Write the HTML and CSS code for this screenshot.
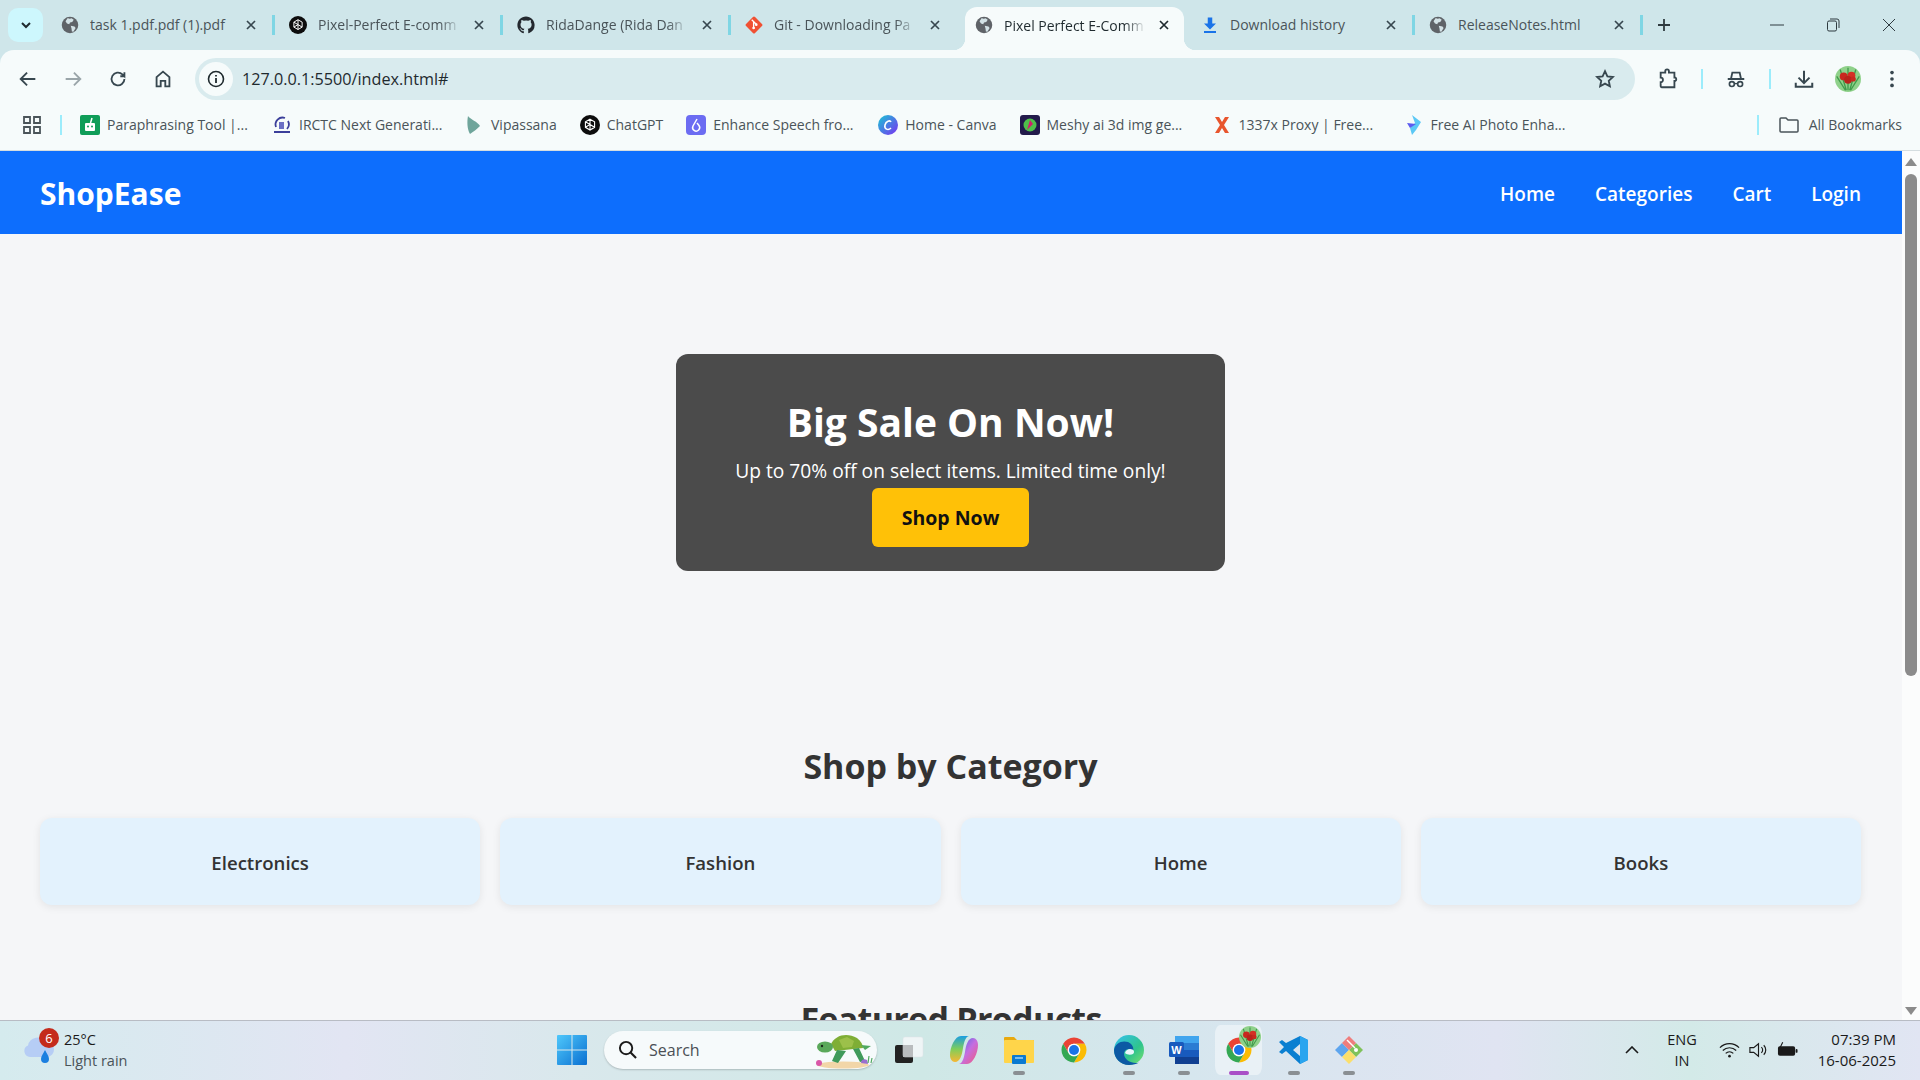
FILE: index.html
```html
<!DOCTYPE html>
<html lang="en">
<head>
    <meta charset="UTF-8">
    <title>Pixel Perfect E-Commerce</title>
    <link rel="stylesheet" href="styles.css">
</head>
<body>

    <!-- shared icons -->
    <svg class="icon-defs" width="0" height="0">
        <symbol id="globe" viewBox="0 0 24 24">
            <circle cx="12" cy="12" r="11" fill="#5f6368"/>
            <path d="M9 2.500c1.500 1.500 4 1 5 .5l3 2-2 3-3 .5-1 2.500-3-1-2-3zM13 13l5 1 1.500 2-3 5-2-.5-.5-4z" fill="#d3e2e6"/>
        </symbol>
        <symbol id="openai" viewBox="0 0 24 24">
            <circle cx="12" cy="12" r="12" fill="#0d0d0d"/>
            <path d="M12 5l5.500 3.200v6.600L12 18l-5.500-3.200V8.200zM12 5v6.500l5.500 3.300M6.500 8.200l5.500 3.300-5.500 3.300M12 18v-6.500" fill="none" stroke="#fff" stroke-width="1.300"/>
        </symbol>
        <symbol id="github" viewBox="0 0 24 24">
            <path d="M12 .5C5.650.5.500 5.650.500 12c0 5.080 3.290 9.390 7.860 10.910.58.110.79-.25.79-.56v-2.170c-3.200.7-3.870-1.360-3.870-1.360-.52-1.330-1.280-1.690-1.280-1.690-1.050-.72.08-.7.08-.7 1.160.08 1.770 1.190 1.770 1.190 1.030 1.760 2.700 1.250 3.360.96.1-.75.4-1.250.73-1.540-2.550-.29-5.240-1.280-5.240-5.680 0-1.260.45-2.280 1.190-3.090-.12-.29-.52-1.460.11-3.050 0 0 .97-.31 3.180 1.180a11 11 0 0 1 5.790 0c2.210-1.490 3.180-1.180 3.180-1.180.63 1.590.23 2.760.11 3.050.74.81 1.190 1.830 1.190 3.090 0 4.420-2.690 5.390-5.250 5.670.41.36.78 1.050.78 2.120v3.140c0 .31.21.67.8.56A11.500 11.500 0 0 0 23.500 12C23.500 5.650 18.350.5 12 .5z" fill="#24292f"/>
        </symbol>
        <symbol id="git" viewBox="0 0 24 24">
            <rect x="3.500" y="3.500" width="17" height="17" rx="2" transform="rotate(45 12 12)" fill="#f05133"/>
            <path d="M9 5l6 6M11.500 8v8" stroke="#fff" stroke-width="1.800"/>
            <circle cx="11.500" cy="16" r="1.800" fill="#fff"/>
            <circle cx="15" cy="11.500" r="1.800" fill="#fff"/>
        </symbol>
        <symbol id="close" viewBox="0 0 12 12">
            <path d="M2 2l8 8M10 2l-8 8" fill="none" stroke="currentColor" stroke-width="1.700"/>
        </symbol>
        <symbol id="chrome" viewBox="0 0 48 48">
            <path d="M6.680 14A20 20 0 0 1 41.320 14H24A10 10 0 0 0 15.340 29z" fill="#ea4335"/>
            <path d="M41.320 14A20 20 0 0 1 24 44L32.660 29A10 10 0 0 0 24 14z" fill="#fbbc04"/>
            <path d="M24 44A20 20 0 0 1 6.680 14L15.340 29A10 10 0 0 0 32.660 29z" fill="#34a853"/>
            <circle cx="24" cy="24" r="10" fill="#fff"/>
            <circle cx="24" cy="24" r="8" fill="#1a73e8"/>
        </symbol>
        <symbol id="rose" viewBox="0 0 30 30">
            <circle cx="15" cy="15" r="15" fill="#8fd18a"/>
            <path d="M6 4l7 24M24 4l-7 24M15 2v26M2 12l10 16M28 12L18 28" stroke="#3f9a4b" stroke-width="1.500"/>
            <circle cx="10" cy="12" r="4.500" fill="#c8281f"/>
            <circle cx="19" cy="11" r="4.500" fill="#d42f25"/>
            <circle cx="15" cy="16" r="4.500" fill="#b8231b"/>
            <circle cx="21" cy="15" r="3" fill="#c8281f"/>
        </symbol>
    </svg>

    <!-- Browser tabs -->
    <div class="tabstrip">
        <button class="tab-search">
            <svg class="tab-search-icon" viewBox="0 0 12 12"><path d="M2 4l4 4 4-4" fill="none" stroke="#1f2a2e" stroke-width="2"/></svg>
        </button>
        <div class="tab">
            <svg class="favicon"><use href="#globe"/></svg>
            <span class="tab-title">task 1.pdf.pdf (1).pdf</span>
            <svg class="tab-close"><use href="#close"/></svg>
        </div>
        <div class="tab">
            <svg class="favicon"><use href="#openai"/></svg>
            <span class="tab-title tab-fade">Pixel-Perfect E-comm</span>
            <svg class="tab-close"><use href="#close"/></svg>
        </div>
        <div class="tab">
            <svg class="favicon"><use href="#github"/></svg>
            <span class="tab-title tab-fade">RidaDange (Rida Dan</span>
            <svg class="tab-close"><use href="#close"/></svg>
        </div>
        <div class="tab tab-before-active">
            <svg class="favicon"><use href="#git"/></svg>
            <span class="tab-title tab-fade">Git - Downloading Pa</span>
            <svg class="tab-close"><use href="#close"/></svg>
        </div>
        <div class="tab tab-active">
            <svg class="favicon"><use href="#globe"/></svg>
            <span class="tab-title tab-fade">Pixel Perfect E-Comm</span>
            <svg class="tab-close"><use href="#close"/></svg>
        </div>
        <div class="tab">
            <svg class="favicon" viewBox="0 0 24 24"><path d="M9 2h6v8h5l-8 8-8-8h5zM4 20h16v2.500H4z" fill="#1a73e8"/></svg>
            <span class="tab-title">Download history</span>
            <svg class="tab-close"><use href="#close"/></svg>
        </div>
        <div class="tab">
            <svg class="favicon"><use href="#globe"/></svg>
            <span class="tab-title">ReleaseNotes.html</span>
            <svg class="tab-close"><use href="#close"/></svg>
        </div>
        <svg class="new-tab" viewBox="0 0 14 14"><path d="M7 1v12M1 7h12" stroke="#2f3b40" stroke-width="1.800"/></svg>
        <div class="window-controls">
            <svg class="win-btn" viewBox="0 0 14 14"><path d="M0 7h14" stroke="#2f3b40"/></svg>
            <svg class="win-btn" viewBox="0 0 14 14"><rect x="1.500" y="3" width="9" height="10" rx="1.500" fill="none" stroke="#2f3b40"/><path d="M4 1h7a2 2 0 0 1 2 2v7" fill="none" stroke="#2f3b40"/></svg>
            <svg class="win-btn" viewBox="0 0 14 14"><path d="M1 1l12 12M13 1L1 13" stroke="#2f3b40"/></svg>
        </div>
    </div>

    <!-- Address bar -->
    <div class="toolbar">
        <svg class="tool-icon" viewBox="0 0 24 24"><path d="M20 12H5M11 5l-7 7 7 7" fill="none" stroke="#37474f" stroke-width="2"/></svg>
        <svg class="tool-icon" viewBox="0 0 24 24"><path d="M4 12h15M13 5l7 7-7 7" fill="none" stroke="#9aa5a9" stroke-width="2"/></svg>
        <svg class="tool-icon" viewBox="0 0 24 24"><path d="M19 12a7 7 0 1 1-2.200-5.100L19 9V4.500M19 9h-4.500" fill="none" stroke="#37474f" stroke-width="2"/></svg>
        <svg class="tool-icon" viewBox="0 0 24 24"><path d="M5 20V10l7-6 7 6v10h-4.500v-6h-5v6z" fill="none" stroke="#37474f" stroke-width="2"/></svg>
        <div class="omnibox">
            <span class="site-info">
                <svg class="site-info-icon" viewBox="0 0 18 18"><circle cx="9" cy="9" r="7.500" fill="none" stroke="#1f2a2e" stroke-width="1.600"/><path d="M9 8v5M9 5v1.600" stroke="#1f2a2e" stroke-width="1.800"/></svg>
            </span>
            <span class="url">127.0.0.1:5500/index.html#</span>
            <svg class="star" viewBox="0 0 24 24"><path d="M12 3.500l2.600 5.600 6 .7-4.500 4.100 1.200 6L12 17l-5.300 2.900 1.200-6-4.500-4.100 6-.7z" fill="none" stroke="#37474f" stroke-width="2"/></svg>
        </div>
        <div class="toolbar-actions">
            <svg class="tool-icon" viewBox="0 0 24 24"><path d="M4 5h5V3.500a2 2 0 0 1 4 0V5h6v5.500h1a2 2 0 0 1 0 3.500h-1v7H5a1 1 0 0 1-1-1v-4.500a2.500 2.500 0 0 0 0-5z" fill="none" stroke="#37474f" stroke-width="2"/></svg>
            <span class="tool-sep"></span>
            <svg class="tool-icon" viewBox="0 0 24 24"><path d="M3 12h18M6.500 12l1.500-7h8l1.500 7" fill="none" stroke="#37474f" stroke-width="2"/><circle cx="7.500" cy="17.500" r="2.700" fill="none" stroke="#37474f" stroke-width="1.800"/><circle cx="16.500" cy="17.500" r="2.700" fill="none" stroke="#37474f" stroke-width="1.800"/><path d="M10 17h4" stroke="#37474f" stroke-width="1.500"/></svg>
            <span class="tool-sep"></span>
            <svg class="tool-icon" viewBox="0 0 24 24"><path d="M12 3v13M6 10.500l6 6 6-6M3 16v4.500h18V16" fill="none" stroke="#37474f" stroke-width="2.200"/></svg>
            <svg class="avatar"><use href="#rose"/></svg>
            <svg class="tool-icon tool-menu" viewBox="0 0 24 24"><circle cx="12" cy="5" r="2" fill="#37474f"/><circle cx="12" cy="12" r="2" fill="#37474f"/><circle cx="12" cy="19" r="2" fill="#37474f"/></svg>
        </div>
    </div>

    <!-- Bookmarks -->
    <div class="bookmarks">
        <svg class="apps" viewBox="0 0 18 18"><path d="M1 1h6v6H1zM11 1h6v6h-6zM1 11h6v6H1zM11 11h6v6h-6z" fill="none" stroke="#4a5459" stroke-width="1.800"/></svg>
        <span class="bm-sep"></span>
        <div class="bm">
            <svg class="bm-icon" viewBox="0 0 20 20"><rect width="20" height="20" rx="2" fill="#0f9d58"/><rect x="5" y="8" width="10" height="8" rx="1" fill="#fff"/><path d="M12 3l-1.500 5" stroke="#fff" stroke-width="1.500"/><circle cx="8" cy="11.500" r="1" fill="#0f9d58"/><circle cx="12" cy="11.500" r="1" fill="#0f9d58"/></svg>
            Paraphrasing Tool |...
        </div>
        <div class="bm">
            <svg class="bm-icon" viewBox="0 0 20 20"><path d="M4 12a7 7 0 0 1 9-9M16 6a7 7 0 0 1-1 8" fill="none" stroke="#3b3f9a" stroke-width="1.800"/><path d="M7 7h5v7H7z" fill="#6a6fc4"/><path d="M2 17h16" stroke="#3b3f9a" stroke-width="2"/></svg>
            IRCTC Next Generati...
        </div>
        <div class="bm bm-short">
            <svg class="bm-icon" viewBox="0 0 20 20"><path d="M4 1c2 3 10 6 12 10-3 3-7 6-10 8C3 14 3 6 4 1z" fill="#6fa59b"/></svg>
            Vipassana
        </div>
        <div class="bm bm-short">
            <svg class="bm-icon"><use href="#openai"/></svg>
            ChatGPT
        </div>
        <div class="bm">
            <svg class="bm-icon" viewBox="0 0 20 20"><rect width="20" height="20" rx="4" fill="#6c6cf2"/><path d="M11 4L7 11a3.500 3.500 0 1 0 6-.5L11 8" fill="none" stroke="#fff" stroke-width="1.500"/></svg>
            Enhance Speech fro...
        </div>
        <div class="bm bm-short">
            <svg class="bm-icon" viewBox="0 0 20 20"><defs><linearGradient id="canva" x1="0" y1="0" x2="1" y2="1"><stop offset="0" stop-color="#18c8d4"/><stop offset="1" stop-color="#7b2ff2"/></linearGradient></defs><circle cx="10" cy="10" r="10" fill="url(#canva)"/><path d="M13 7c-1-2-5-1-6 3s3 6 6 3" fill="none" stroke="#fff" stroke-width="1.600"/></svg>
            Home - Canva
        </div>
        <div class="bm">
            <svg class="bm-icon" viewBox="0 0 20 20"><rect width="20" height="20" rx="3" fill="#221a4a"/><circle cx="10" cy="10" r="6.500" fill="#4fc04a"/><path d="M7 15l3-10 3 4z" fill="#d11f6e"/></svg>
            Meshy ai 3d img ge...
        </div>
        <div class="bm">
            <svg class="bm-icon" viewBox="0 0 20 20"><path d="M3 2h4l3 5 3-5h4l-5 8 5 8h-4l-3-5-3 5H3l5-8z" fill="#e8552d"/></svg>
            1337x Proxy | Free...
        </div>
        <div class="bm">
            <svg class="bm-icon" viewBox="0 0 20 20"><path d="M8 0l9 7-5 8-4 5-2-7 5-5z" fill="#5bc8f5"/><path d="M3 8l9 1-6 4z" fill="#5b5bf0"/></svg>
            Free AI Photo Enha...
        </div>
        <span class="bm-sep bm-sep-end"></span>
        <div class="bm bm-all">
            <svg class="bm-icon" viewBox="0 0 20 18"><path d="M1 3a1 1 0 0 1 1-1h5l2 2h9a1 1 0 0 1 1 1v10a1 1 0 0 1-1 1H2a1 1 0 0 1-1-1z" fill="none" stroke="#4a5459" stroke-width="1.500"/></svg>
            All Bookmarks
        </div>
    </div>

    <!-- Page inside the browser -->
    <div class="viewport">
        <div class="page">
            <header class="navbar">
                <div class="logo">ShopEase</div>
                <nav class="nav-links">
                    <a href="#">Home</a>
                    <a href="#">Categories</a>
                    <a href="#">Cart</a>
                    <a href="#">Login</a>
                </nav>
            </header>

            <section class="hero">
                <div class="hero-card">
                    <h1>Big Sale On Now!</h1>
                    <p>Up to 70% off on select items. Limited time only!</p>
                    <a class="shop-btn" href="#">Shop Now</a>
                </div>
            </section>

            <section class="categories">
                <h2>Shop by Category</h2>
                <div class="category-grid">
                    <div class="category-card">Electronics</div>
                    <div class="category-card">Fashion</div>
                    <div class="category-card">Home</div>
                    <div class="category-card">Books</div>
                </div>
            </section>

            <section class="featured">
                <h2>Featured Products</h2>
            </section>
        </div>

        <div class="scrollbar">
            <span class="arrow-up"></span>
            <span class="scroll-thumb"></span>
            <span class="arrow-down"></span>
        </div>
    </div>

    <!-- Windows taskbar -->
    <footer class="taskbar">
        <div class="weather">
            <svg class="weather-icon" viewBox="0 0 34 34"><path d="M9 24a6 6 0 0 1-2-11.500A10 10 0 0 1 25 9a7.500 7.500 0 0 1 1 15z" fill="#b6cdf5"/><path d="M24 17c2 4 4 6 4 9a4 4 0 0 1-8 0c0-3 2-5 4-9z" fill="#1b7fe0"/></svg>
            <span class="weather-badge">6</span>
            <div class="weather-text">
                <div class="temp">25°C</div>
                <div class="cond">Light rain</div>
            </div>
        </div>

        <div class="task-center">
            <svg class="win-logo" viewBox="0 0 30 30">
                <defs><linearGradient id="win" x1="0" y1="0" x2="1" y2="1"><stop offset="0" stop-color="#4fc8fb"/><stop offset="1" stop-color="#0a6fd1"/></linearGradient></defs>
                <path d="M0 1a1 1 0 0 1 1-1h13.500v14.500H0zM15.500 0H29a1 1 0 0 1 1 1v13.500H15.500zM0 15.500h14.500V30H1a1 1 0 0 1-1-1zM15.500 15.500H30V29a1 1 0 0 1-1 1H15.500z" fill="url(#win)"/>
            </svg>
            <div class="search-box">
                <svg class="search-icon" viewBox="0 0 20 20"><circle cx="8.500" cy="8.500" r="6.500" fill="none" stroke="#1a1a1a" stroke-width="2"/><path d="M13 13l6 6" stroke="#1a1a1a" stroke-width="2.200"/></svg>
                <span>Search</span>
                <svg class="turtle" viewBox="0 0 60 40">
                    <ellipse cx="30" cy="35" rx="26" ry="3.500" fill="#f2d6a8"/>
                    <path d="M18 14C22 5 34 2 44 8c4 3 6 7 6 10L22 21z" fill="#7fae35"/>
                    <path d="M26 10l8-3 7 4-2 6-9 1z" fill="#9cc04a"/>
                    <path d="M24 20l-5 11 6 2 8-12zM40 19l7 13 5-1-6-13z" fill="#3f9a5b"/>
                    <ellipse cx="12" cy="17" rx="8" ry="5.500" fill="#5aa85a"/>
                    <circle cx="9" cy="16" r="1.200" fill="#1c2a1c"/>
                    <path d="M48 15l10 1-6 4z" fill="#4fa860"/>
                    <circle cx="6" cy="33" r="3" fill="#d957a8"/>
                    <path d="M48 33c0-3 3-5 6-3l1 4z" fill="#9a6fd0"/>
                    <path d="M55 33l1-7M58 33l1-5" stroke="#4fa860" stroke-width="1.200"/>
                </svg>
            </div>
            <div class="task-apps">
                <div class="app">
                    <svg class="app-icon" viewBox="0 0 30 30"><rect x="1" y="10" width="18" height="18" rx="2" fill="#222"/><rect x="9" y="2" width="20" height="20" rx="2" fill="#f4f7f8" fill-opacity=".85" stroke="#dde3e6" stroke-width=".5"/><rect x="9" y="10" width="10" height="12" fill="#b9bcbe"/></svg>
                </div>
                <div class="app">
                    <svg class="app-icon" viewBox="0 0 30 30"><defs><linearGradient id="cop1" x1="0" y1="0" x2="0" y2="1"><stop offset="0" stop-color="#1b9de2"/><stop offset=".5" stop-color="#7fce5a"/><stop offset="1" stop-color="#f7b733"/></linearGradient><linearGradient id="cop2" x1="0" y1="0" x2="1" y2="1"><stop offset="0" stop-color="#3f6be8"/><stop offset=".5" stop-color="#c56ee0"/><stop offset="1" stop-color="#f2597a"/></linearGradient></defs><path d="M12 1h8c-4 1-5 7-6 12-1 7-3 14-8 14-3 0-5-3-5-7C1 12 6 1 12 1z" fill="url(#cop1)"/><path d="M18 29h-8c4-1 5-7 6-12 1-7 3-14 8-14 3 0 5 3 5 7 0 8-5 19-11 19z" fill="url(#cop2)"/></svg>
                </div>
                <div class="app app-open">
                    <svg class="app-icon" viewBox="0 0 30 30"><path d="M0 3a1 1 0 0 1 1-1h9l3 3h16a1 1 0 0 1 1 1v5H0z" fill="#e8a90f"/><rect y="5" width="30" height="23" rx="1" fill="#ffd54a"/><rect x="8" y="20" width="14" height="9" rx="1" fill="#0a7ad1"/><path d="M11 23h8" stroke="#9fd4f7" stroke-width="1.500"/></svg>
                </div>
                <div class="app">
                    <svg class="app-icon"><use href="#chrome"/></svg>
                </div>
                <div class="app app-open">
                    <svg class="app-icon" viewBox="0 0 30 30"><defs><linearGradient id="edge" x1="0" y1="0" x2="1" y2="1"><stop offset="0" stop-color="#35c1f1"/><stop offset=".6" stop-color="#2fc48d"/><stop offset="1" stop-color="#7ee26a"/></linearGradient></defs><circle cx="15" cy="15" r="15" fill="url(#edge)"/><path d="M0 15C1 8 8 5 14 7c5 2 6 7 5 9-4-3-9-2-9 3 0 5 6 9 12 9 1 0 2 0 3-.5C23 29 19 30 15 30 6 30 0 23 0 15z" fill="#0c59a4"/><path d="M16 14c4 0 5 3 3 5-2 1-6 1-8-1 1-3 3-4 5-4z" fill="#e8f6fc"/></svg>
                </div>
                <div class="app app-open">
                    <svg class="app-icon" viewBox="0 0 30 30"><rect x="6" y="1" width="24" height="28" rx="1.500" fill="#2b7cd3"/><rect x="6" y="1" width="24" height="7" fill="#41a5ee"/><rect x="6" y="15" width="24" height="7" fill="#185abd"/><rect x="6" y="22" width="24" height="7" fill="#103f91"/><rect y="7" width="15" height="15" rx="1.500" fill="#185abd"/><text class="word-w" x="7.500" y="18.500">W</text></svg>
                </div>
                <div class="app app-active">
                    <svg class="app-icon"><use href="#chrome"/></svg>
                    <svg class="app-badge"><use href="#rose"/></svg>
                </div>
                <div class="app app-open">
                    <svg class="app-icon" viewBox="0 0 30 30"><path d="M21 1l8 4v20l-8 4L7 16l-4 3-3-2 5-5-5-5 3-2 4 3zM21 9l-7 6 7 6z" fill="#0a7fd1"/><path d="M21 1l8 4v20l-8 4z" fill="#2aa5ef"/></svg>
                </div>
                <div class="app app-open">
                    <svg class="app-icon" viewBox="0 0 30 30"><path d="M8 8l7 7-7 7-7-7z" fill="#5ea5ee"/><path d="M22 8l7 7-7 7-7-7z" fill="#7fc25a"/><path d="M15 15l7 7-7 7-7-7z" fill="#fbdf6c"/><path d="M15 1l7 7-7 7-7-7z" fill="#ef7d7d"/><path d="M13 5l8 8" stroke="#fff" stroke-width="1.500"/><circle cx="22" cy="15" r="2" fill="#fff"/></svg>
                </div>
            </div>
        </div>

        <div class="tray">
            <svg class="tray-chevron" viewBox="0 0 14 8"><path d="M1 7l6-6 6 6" fill="none" stroke="#1a1a1a" stroke-width="1.600"/></svg>
            <div class="lang">ENG<br>IN</div>
            <div class="tray-icons">
                <svg class="tray-icon" viewBox="0 0 22 18"><path d="M1 6.500a14 14 0 0 1 20 0M4 9.500a10 10 0 0 1 14 0M7 12.500a6 6 0 0 1 8 0" fill="none" stroke="#1a1a1a" stroke-width="1.300"/><circle cx="11" cy="15.500" r="1.400" fill="#1a1a1a"/></svg>
                <svg class="tray-icon" viewBox="0 0 22 18"><path d="M2 6.500h4l5-4v13l-5-4H2z" fill="none" stroke="#1a1a1a" stroke-width="1.200"/><path d="M14 6a4 4 0 0 1 0 6M16.500 4a7 7 0 0 1 0 10" fill="none" stroke="#1a1a1a" stroke-width="1.200"/></svg>
                <svg class="tray-icon" viewBox="0 0 22 18"><rect x="1" y="5" width="18" height="10" rx="2" fill="#1a1a1a"/><rect x="19.500" y="8" width="2" height="4" rx="1" fill="#1a1a1a"/><path d="M6 1L3 7h3l-1 4" fill="none" stroke="#1a1a1a" stroke-width="1.200"/></svg>
            </div>
            <div class="clock">07:39 PM<br>16-06-2025</div>
        </div>
    </footer>

</body>
</html>
```

FILE: styles.css
```css
* {
    box-sizing: border-box;
}

body {
    font-family: 'Open Sans', 'Noto Sans', sans-serif;
    margin: 0;
    height: 100vh;
    overflow: hidden;
    display: flex;
    flex-direction: column;
    background-color: #cfe6ea;
    color: #333;
}

svg {
    flex-shrink: 0;
    display: block;
}

.icon-defs {
    position: absolute;
}

/* Tabs */
.tabstrip {
    height: 50px;
    flex-shrink: 0;
    display: flex;
    align-items: center;
    padding-left: 8px;
    padding-bottom: 1px;
    background-color: #cfe6ea;
}

.tab-search {
    width: 35px;
    height: 34px;
    margin-right: 4px;
    border: none;
    border-radius: 10px;
    background-color: #cdf7fd;
    display: flex;
    align-items: center;
    justify-content: center;
    padding: 0;
}

.tab-search-icon {
    width: 12px;
    height: 12px;
}

.tab {
    width: 228px;
    height: 20px;
    padding: 0 15px 0 14px;
    display: flex;
    align-items: center;
    border-right: 3px solid #7fd6e4;
    font-size: 14px;
    color: #4a5459;
}

.tab-before-active {
    border-right-color: transparent;
}

.tab-active {
    position: relative;
    height: 43px;
    width: 219px;
    margin: 0 3px -1px 6px;
    padding: 0 14px 7px 10px;
    align-self: flex-end;
    background-color: #f6fbfb;
    border-radius: 12px 12px 0 0;
    border-right: none;
    color: #1f2a2e;
}

.tab-active::before,
.tab-active::after {
    content: "";
    position: absolute;
    bottom: 0;
    width: 12px;
    height: 12px;
}

.tab-active::before {
    left: -12px;
    background: radial-gradient(circle at 0 0, transparent 12px, #f6fbfb 12.500px);
}

.tab-active::after {
    right: -12px;
    background: radial-gradient(circle at 100% 0, transparent 12px, #f6fbfb 12.500px);
}

.favicon {
    width: 18px;
    height: 18px;
    margin-right: 11px;
}

.tab-title {
    flex: 1;
    overflow: hidden;
    white-space: nowrap;
}

.tab-fade {
    -webkit-mask-image: linear-gradient(to right, #000 85%, transparent);
    mask-image: linear-gradient(to right, #000 85%, transparent);
}

.tab-close {
    width: 12px;
    height: 12px;
    margin-left: 12px;
    color: #37474f;
}

.tab-active .tab-close {
    color: #1f2a2e;
}

.new-tab {
    width: 14px;
    height: 14px;
    margin-left: 14px;
}

.window-controls {
    margin-left: auto;
    display: flex;
    gap: 42px;
    padding-right: 24px;
}

.win-btn {
    width: 14px;
    height: 14px;
}

/* Address bar */
.toolbar {
    height: 50px;
    flex-shrink: 0;
    display: flex;
    align-items: center;
    padding: 8px 0 0 17px;
    gap: 23px;
    background-color: #f6fbfb;
    border-radius: 14px 14px 0 0;
}

.tool-icon {
    width: 22px;
    height: 22px;
}

.omnibox {
    width: 1440px;
    height: 42px;
    margin-left: -2px;
    padding: 0 14px 0 4px;
    border-radius: 21px;
    background-color: #d9ebee;
    display: flex;
    align-items: center;
    font-size: 16.200px;
    color: #1f2a2e;
}

.site-info {
    width: 34px;
    height: 34px;
    border-radius: 50%;
    background-color: #f6fbfb;
    display: flex;
    align-items: center;
    justify-content: center;
    margin-right: 9px;
}

.site-info-icon {
    width: 18px;
    height: 18px;
}

.url {
    flex: 1;
}

.star {
    width: 22px;
    height: 22px;
    margin-right: 5px;
}

.toolbar-actions {
    display: flex;
    align-items: center;
    gap: 22px;
    margin-left: -1px;
}

.tool-sep {
    width: 2px;
    height: 20px;
    background-color: #9cecfb;
}

.avatar {
    width: 26px;
    height: 30px;
    margin-left: -2px;
}

.tool-menu {
    margin-left: -2px;
}

/* Bookmarks */
.bookmarks {
    height: 51px;
    flex-shrink: 0;
    display: flex;
    align-items: center;
    padding: 0 0 1px 23px;
    background-color: #f6fbfb;
    font-size: 14px;
    color: #4a5459;
    border-bottom: 1px solid #d5dde0;
    white-space: nowrap;
}

.apps {
    width: 18px;
    height: 18px;
    margin-right: 19px;
}

.bm-sep {
    width: 2px;
    height: 20px;
    background-color: #9cecfb;
    margin-right: 18px;
}

.bm-sep-end {
    margin-left: auto;
    margin-right: 20px;
}

/* chrome caps long bookmarks at one width */
.bm {
    width: 192px;
    display: flex;
    align-items: center;
    gap: 7px;
}

.bm-short {
    width: auto;
    margin-right: 23px;
}

.bm-all {
    width: auto;
    margin-right: 18px;
    gap: 10px;
}

.bm-icon {
    width: 20px;
    height: 20px;
}

/* Web page */
.viewport {
    height: 869px;
    flex-shrink: 0;
    display: flex;
    overflow: hidden;
    background-color: #fff;
}

.page {
    width: 1902px;
    background-color: #f5f6f8;
}

.navbar {
    height: 83px;
    padding: 2px 41px 0 40px;
    display: flex;
    align-items: center;
    justify-content: space-between;
    background-color: #0d6efd;
    color: white;
}

.logo {
    font-size: 30px;
    font-weight: 700;
}

.nav-links {
    display: flex;
    gap: 40px;
}

.nav-links a {
    color: white;
    text-decoration: none;
    font-size: 19px;
    font-weight: 600;
}

.hero {
    padding-top: 120px;
    display: flex;
    justify-content: center;
}

.hero-card {
    width: 549px;
    height: 217px;
    margin-right: 1px;
    padding-top: 40px;
    background-color: #4b4b4b;
    border-radius: 12px;
    color: white;
    text-align: center;
    display: flex;
    flex-direction: column;
    align-items: center;
}

h1 {
    font-size: 39px;
    font-weight: 700;
    margin: 0;
    line-height: 56px;
}

.hero-card p {
    font-size: 19.200px;
    margin: 8px 0 0;
    line-height: 26px;
}

.shop-btn {
    width: 157px;
    height: 59px;
    margin-top: 4px;
    background-color: #ffc107;
    border-radius: 6px;
    color: #111;
    font-size: 19.500px;
    font-weight: 700;
    text-decoration: none;
    display: flex;
    align-items: center;
    justify-content: center;
}

h2 {
    font-size: 34px;
    font-weight: 700;
    margin: 0;
    line-height: 46px;
    text-align: center;
    color: #333;
}

.categories {
    padding: 172px 41px 0 40px;
}

.category-grid {
    margin-top: 29px;
    display: grid;
    grid-template-columns: repeat(4, 1fr);
    gap: 20px;
}

.category-card {
    height: 87px;
    padding-top: 2px;
    background-color: #e3f2fd;
    border-radius: 12px;
    box-shadow: 0 2px 8px rgba(0, 0, 0, 0.08);
    display: flex;
    align-items: center;
    justify-content: center;
    font-size: 18.600px;
    font-weight: 600;
}

.featured {
    padding-top: 91px;
}

.featured h2 {
    letter-spacing: -0.7px;
}

.scrollbar {
    width: 18px;
    display: flex;
    flex-direction: column;
    align-items: center;
    padding-top: 7px;
    background-color: #fbfcfc;
}

.arrow-up {
    width: 0;
    height: 0;
    border-left: 6px solid transparent;
    border-right: 6px solid transparent;
    border-bottom: 8px solid #8b8b8b;
}

.scroll-thumb {
    width: 12px;
    height: 502px;
    margin-top: 8px;
    background-color: #8b8b8b;
    border-radius: 6px;
}

.arrow-down {
    width: 0;
    height: 0;
    margin-top: auto;
    margin-bottom: 5px;
    border-left: 6px solid transparent;
    border-right: 6px solid transparent;
    border-top: 8px solid #8b8b8b;
}

/* Taskbar */
.taskbar {
    height: 60px;
    flex-shrink: 0;
    display: flex;
    align-items: center;
    padding-bottom: 2px;
    border-top: 1px solid #b8bcc4;
    background: linear-gradient(90deg, #d5ebee 0%, #e2e5f3 18%, #d9e8ec 30%, #cfe8e6 48%, #d6e6ee 62%, #e0e4f2 78%, #d3eae8 88%, #e1e5f3 100%);
    color: #1a1a1a;
    font-size: 14.500px;
}

.weather {
    width: 557px;
    padding-left: 21px;
    display: flex;
    align-items: center;
    position: relative;
}

.weather-icon {
    width: 34px;
    height: 34px;
}

.weather-badge {
    position: absolute;
    left: 39px;
    top: -1px;
    width: 20px;
    height: 20px;
    border-radius: 50%;
    background-color: #c42b1c;
    color: white;
    font-size: 13px;
    text-align: center;
    line-height: 20px;
}

.weather-text {
    margin-left: 9px;
    line-height: 21px;
}

.cond {
    color: #4a5459;
}

.task-center {
    display: flex;
    align-items: center;
}

.win-logo {
    width: 30px;
    height: 30px;
}

.search-box {
    width: 273px;
    height: 38px;
    margin-left: 17px;
    padding-left: 14px;
    border-radius: 19px;
    background-color: #f6fafb;
    box-shadow: 0 1px 2px rgba(0, 0, 0, 0.2);
    display: flex;
    align-items: center;
    font-size: 16px;
    color: #4a4f55;
}

.search-icon {
    width: 19px;
    height: 19px;
    margin-right: 12px;
}

.turtle {
    width: 60px;
    height: 40px;
    margin-left: auto;
    margin-right: 4px;
}

.task-apps {
    display: flex;
    margin-left: 4px;
}

.app {
    width: 55px;
    height: 50px;
    position: relative;
    display: flex;
    align-items: center;
    justify-content: center;
}

.app-icon {
    width: 30px;
    height: 30px;
}

.app-open::after,
.app-active::after {
    content: "";
    position: absolute;
    bottom: 0;
    left: 50%;
    width: 12px;
    height: 4px;
    margin-left: -6px;
    border-radius: 2px;
    background-color: #8a8f93;
}

.app-active {
    background-color: rgba(255, 255, 255, 0.45);
    background-clip: content-box;
    padding: 0 4px;
    border-radius: 9px;
}

.app-active::after {
    width: 20px;
    margin-left: -10px;
    background-color: #a94fc7;
}

.app-badge {
    position: absolute;
    top: 1px;
    right: 5px;
    width: 22px;
    height: 22px;
}

.word-w {
    font-family: 'Liberation Sans', sans-serif;
    font-size: 11px;
    font-weight: 700;
    fill: #fff;
    text-anchor: middle;
}

.tray {
    margin-left: auto;
    padding-right: 24px;
    display: flex;
    align-items: center;
}

.tray-chevron {
    width: 14px;
    height: 8px;
    margin-right: 1px;
}

.lang {
    margin: 0 2px 0 27px;
    line-height: 21px;
    text-align: center;
}

.tray-icons {
    display: flex;
    gap: 8px;
    margin-left: 20px;
}

.tray-icon {
    width: 21px;
    height: 18px;
}

.clock {
    margin-left: 20px;
    font-size: 15px;
    line-height: 21px;
    text-align: right;
}
```
